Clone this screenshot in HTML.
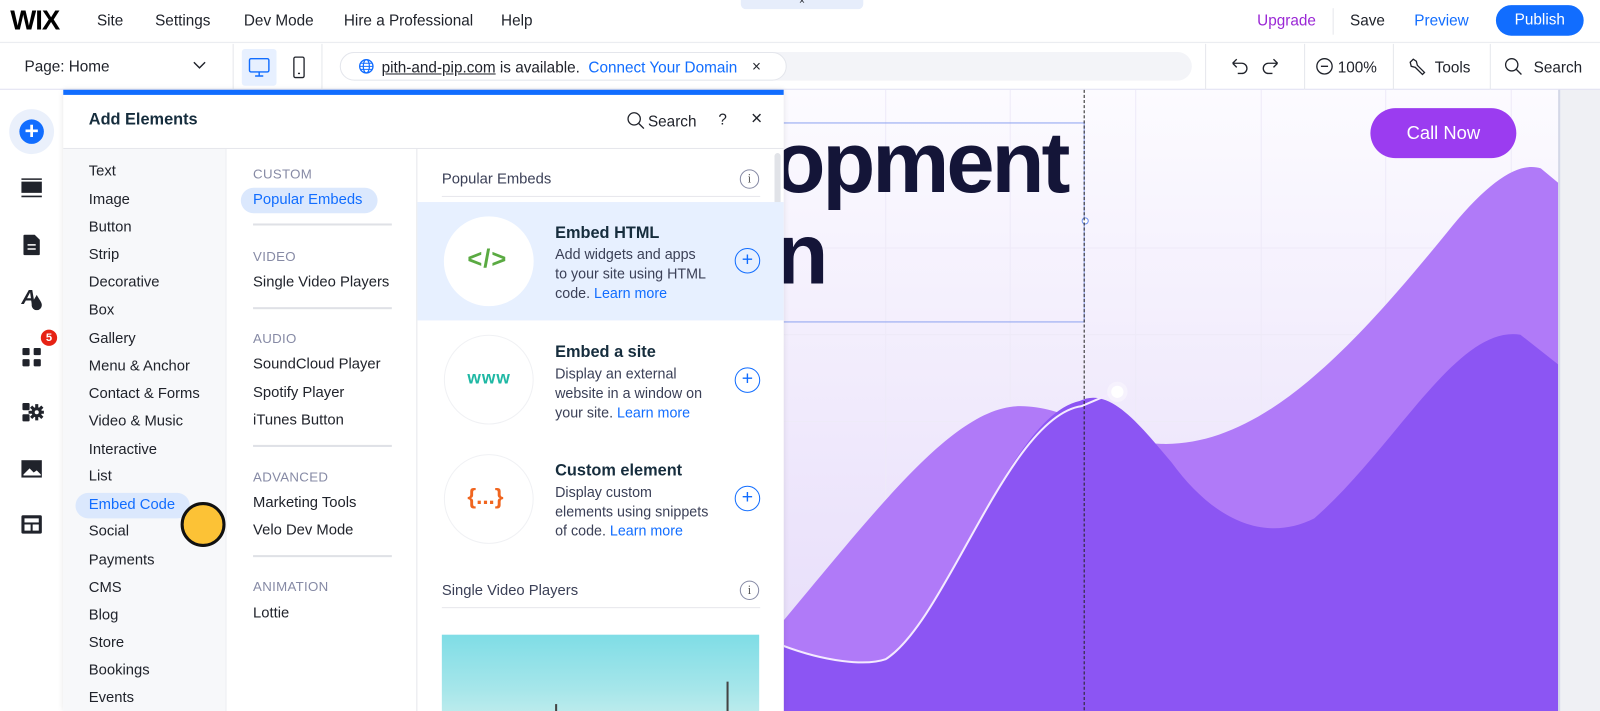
<!DOCTYPE html>
<html><head><meta charset="utf-8"><style>
*{margin:0;padding:0;box-sizing:border-box}
body{width:1600px;height:711px;overflow:hidden;position:relative;font-family:"Liberation Sans",sans-serif;color:#20232b;background:#fff}
#w{position:absolute;left:0;top:0;width:1568px;height:697px;transform:scale(1.020408);transform-origin:0 0;overflow:hidden}
.a{position:absolute;white-space:nowrap}
.t15{font-size:15px}
.c1 div{position:absolute;left:87px;font-size:14.5px;color:#20232b}
.hd{font-size:13px;color:#868aa5;letter-spacing:.3px}
.sep{position:absolute;left:248px;width:136px;height:2px;background:#dfe1e6}
.ttl{font-size:16px;font-weight:bold;color:#162d3d}
.desc{font-size:14px;line-height:19px;color:#3b4057}
.lm{color:#116dff}
.plus{position:absolute;width:25px;height:25px;border:1.5px solid #116dff;border-radius:50%;color:#116dff;text-align:center;line-height:21px;font-size:19px}
.circ{position:absolute;width:88px;height:88px;border-radius:50%;background:#fff;border:1px solid #f0f1f4}
.vd{position:absolute;top:43px;width:1px;height:45px;background:#e5e7ec}
</style></head><body><div id="w">
<!-- top bar -->
<div class="a" style="left:0;top:0;width:1568px;height:42px;border-bottom:1px solid #e8eaef"></div>
<div class="a" style="left:726px;top:0;width:120px;height:9px;background:#e6edfb;border-radius:0 0 5px 5px;font-size:10px;text-align:center;line-height:3px">×</div>
<div class="a" style="left:10px;top:5px;font-size:27px;font-weight:bold;letter-spacing:-1px;color:#000">WIX</div>
<div class="a t15" style="left:95px;top:12px">Site</div>
<div class="a t15" style="left:152px;top:12px">Settings</div>
<div class="a t15" style="left:239px;top:12px">Dev Mode</div>
<div class="a t15" style="left:337px;top:12px">Hire a Professional</div>
<div class="a t15" style="left:491px;top:12px">Help</div>
<div class="a t15" style="left:1232px;top:12px;color:#9a27d5">Upgrade</div>
<div class="a" style="left:1306px;top:8px;width:1px;height:26px;background:#e5e7ec"></div>
<div class="a t15" style="left:1323px;top:12px">Save</div>
<div class="a t15" style="left:1386px;top:12px;color:#116dff">Preview</div>
<div class="a t15" style="left:1466px;top:5px;width:86px;height:30px;border-radius:15px;background:#116dff;color:#fff;text-align:center;line-height:30px">Publish</div>
<!-- second bar -->
<div class="a" style="left:0;top:43px;width:1568px;height:45px;border-bottom:1px solid #dcdcf0;box-shadow:0 2px 3px rgba(120,110,200,.15)"></div>
<div class="a t15" style="left:24px;top:57px">Page: Home</div>
<svg class="a" style="left:189px;top:60px" width="13" height="9"><path d="M1 1l5.5 5.5L12 1" stroke="#20232b" stroke-width="1.4" fill="none"/></svg>
<div class="vd" style="left:228px"></div>
<div class="a" style="left:237px;top:48px;width:34px;height:36px;background:#e7f0ff;border-radius:3px"></div>
<svg class="a" style="left:243px;top:56px" width="22" height="20"><rect x="1.5" y="1.5" width="19" height="13" rx="1.5" stroke="#116dff" stroke-width="1.4" fill="none"/><path d="M11 15v3M7 18.5h8" stroke="#116dff" stroke-width="1.4"/></svg>
<svg class="a" style="left:287px;top:55px" width="12" height="22"><rect x="1" y="1" width="10" height="20" rx="1.5" stroke="#20232b" stroke-width="1.3" fill="none"/><path d="M5 17h2" stroke="#20232b" stroke-width="1.3"/></svg>
<div class="vd" style="left:315px"></div>
<div class="a" style="left:333px;top:51px;width:835px;height:28px;background:#f3f4f8;border-radius:14px"></div>
<div class="a" style="left:333px;top:51px;width:438px;height:28px;background:#fff;border:1px solid #e4e6ec;border-radius:14px"></div>
<svg class="a" style="left:351px;top:57px" width="16" height="16"><circle cx="8" cy="8" r="6.5" stroke="#116dff" stroke-width="1.3" fill="none"/><ellipse cx="8" cy="8" rx="3" ry="6.5" stroke="#116dff" stroke-width="1.2" fill="none"/><path d="M1.5 8h13M2.5 5h11M2.5 11h11" stroke="#116dff" stroke-width="1"/></svg>
<div class="a t15" style="left:374px;top:58px;color:#20232b"><span style="text-decoration:underline">pith-and-pip.com</span> is available.&nbsp; <span style="color:#116dff">Connect Your Domain</span></div>
<div class="a" style="left:737px;top:57px;font-size:15px">×</div>
<div class="vd" style="left:1181px"></div>
<svg class="a" style="left:1204px;top:56px" width="52" height="20"><path d="M4 6h9a5 5 0 010 10H9M4 6l4-4M4 6l4 4" stroke="#20232b" stroke-width="1.3" fill="none"/><path d="M48 6h-9a5 5 0 000 10h4M48 6l-4-4M48 6l-4 4" stroke="#20232b" stroke-width="1.3" fill="none"/></svg>
<div class="vd" style="left:1278px"></div>
<svg class="a" style="left:1289px;top:56px" width="18" height="18"><circle cx="9" cy="9" r="7.5" stroke="#20232b" stroke-width="1.3" fill="none"/><path d="M5.5 9h7" stroke="#20232b" stroke-width="1.3"/></svg>
<div class="a t15" style="left:1311px;top:58px">100%</div>
<div class="vd" style="left:1365px"></div>
<svg class="a" style="left:1379px;top:55px" width="20" height="20"><path d="M3 6l3-3 3 2 1 4 7 7-2 2-7-7-4-1z" stroke="#20232b" stroke-width="1.3" fill="none"/></svg>
<div class="a t15" style="left:1406px;top:58px">Tools</div>
<div class="vd" style="left:1460px"></div>
<svg class="a" style="left:1474px;top:56px" width="18" height="18"><circle cx="7.5" cy="7.5" r="6" stroke="#20232b" stroke-width="1.3" fill="none"/><path d="M12 12l5 5" stroke="#20232b" stroke-width="1.3"/></svg>
<div class="a t15" style="left:1503px;top:58px">Search</div>

<!-- canvas -->
<div class="a" style="left:768px;top:88px;width:760px;height:609px;background:linear-gradient(#fcfbff,#ece4fb 70%,#e6dcfa);overflow:hidden">
<svg width="760" height="623" style="position:absolute;left:0;top:0">
<g stroke="#eeeaf8" stroke-width="1"><path d="M100 0v623M222 0v623M345 0v623M468 0v623M590 0v623M713 0v623M0 155h760M0 240h760M0 325h760"/></g>
<path d="M0 520 C100 400 170 310 232 310 C280 310 320 345 370 347 C470 350 560 250 650 140 C690 90 720 70 742 77 L760 92 L760 623 L0 623Z" fill="#b07af8"/>
<path d="M0 545 C40 560 80 565 100 558 C160 520 220 320 290 305 C320 290 350 330 380 365 C420 420 470 445 520 420 C600 350 660 230 722 240 L760 270 L760 623 L0 623Z" fill="#8c55f3"/>
<path d="M0 545 C40 560 80 565 100 558 C160 520 220 320 292 310 L320 298" stroke="#f4eaff" stroke-width="2" fill="none"/>
<circle cx="327" cy="296" r="10" fill="#ffffff" opacity=".35"/><circle cx="327" cy="296" r="6" fill="#fff"/>
</svg>
<div class="a" style="left:-11px;top:24px;font-size:85px;line-height:95px;font-weight:bold;color:#141538;letter-spacing:-3px">opment</div>
<div class="a" style="left:-8px;top:114px;font-size:85px;line-height:95px;font-weight:bold;color:#141538">n</div>
<div class="a" style="left:0;top:32px;width:295px;height:196px;border:1px solid #8ea3f0;border-left:none"></div>
<div class="a" style="left:292px;top:125px;width:7px;height:7px;border:1px solid #6f8ff0;background:#fff;border-radius:50%"></div>
<div class="a" style="left:294px;top:0;height:623px;border-left:1.5px dashed #222"></div>
<div class="a" style="left:575px;top:18px;width:143px;height:49px;border-radius:25px;background:#9b3cf0;color:#fff;font-size:18px;text-align:center;line-height:49px">Call Now</div>
</div>
<div class="a" style="left:1527px;top:88px;width:41px;height:609px;background:#eff0f4;border-left:2px solid #d4d8e8"></div>

<!-- left rail -->
<div class="a" style="left:0;top:88px;width:62px;height:609px;background:#fff"></div>
<div class="a" style="left:9px;top:107px;width:44px;height:44px;border-radius:50%;background:#eaf0fb"></div>
<div class="a" style="left:19px;top:117px;width:24px;height:24px;border-radius:50%;background:#116dff;color:#fff;text-align:center;font-size:24px;line-height:23px;font-weight:bold">+</div>
<svg class="a" style="left:20px;top:174px" width="22" height="20"><rect x="1" y="4" width="20" height="11" fill="#20232b"/><path d="M1 1.5h20M1 18.5h20" stroke="#20232b" stroke-width="1.5"/></svg>
<svg class="a" style="left:22px;top:229px" width="18" height="22"><path d="M2 1h10l5 5v14a1 1 0 01-1 1H2a1 1 0 01-1-1V2a1 1 0 011-1z" fill="#20232b"/><path d="M5 11h8M5 15h8" stroke="#fff" stroke-width="1.5"/></svg>
<div class="a" style="left:21px;top:281px;font-size:20px;font-weight:bold;font-style:italic;color:#20232b">A</div>
<svg class="a" style="left:30px;top:288px" width="12" height="16"><path d="M6 1C4 5 1 8 1 11a5 5 0 0010 0c0-3-3-6-5-10z" fill="#20232b"/></svg>
<svg class="a" style="left:21px;top:340px" width="20" height="20"><rect x="1" y="1" width="7" height="7" rx="1" fill="#20232b"/><rect x="12" y="1" width="7" height="7" rx="1" fill="#20232b"/><rect x="1" y="12" width="7" height="7" rx="1" fill="#20232b"/><rect x="12" y="12" width="7" height="7" rx="1" fill="#20232b"/></svg>
<div class="a" style="left:40px;top:323px;width:16px;height:16px;border-radius:50%;background:#e62214;color:#fff;font-size:11px;text-align:center;line-height:16px;font-weight:bold">5</div>
<svg class="a" style="left:21px;top:394px" width="22" height="20"><rect x="1" y="1" width="7" height="7" rx="1" fill="#20232b"/><rect x="1" y="12" width="7" height="7" rx="1" fill="#20232b"/><circle cx="15" cy="10" r="5" fill="#20232b"/><path d="M15 2v16M7 10h16M9.5 4.5l11 11M20.5 4.5l-11 11" stroke="#20232b" stroke-width="3"/><circle cx="15" cy="10" r="2" fill="#fff"/></svg>
<svg class="a" style="left:20px;top:450px" width="22" height="19"><rect x="1" y="1" width="20" height="17" fill="#20232b"/><path d="M3 15l6-6 4 4 3-2 4 4v1H3z" fill="#fff"/></svg>
<svg class="a" style="left:20px;top:504px" width="22" height="20"><rect x="1" y="1" width="20" height="18" rx="1.5" fill="#20232b"/><rect x="4" y="4" width="14" height="4" fill="#fff"/><rect x="4" y="10" width="6" height="6" fill="#fff"/><rect x="12" y="10" width="6" height="6" fill="#fff"/></svg>

<!-- panel -->
<div class="a" style="left:62px;top:88px;width:706px;height:609px;background:#fff;box-shadow:0 0 6px rgba(0,0,0,.12)"></div>
<div class="a" style="left:62px;top:88px;width:706px;height:5px;background:#116dff"></div>
<div class="a" style="left:87px;top:109px;font-size:16px;font-weight:bold;color:#162d3d">Add Elements</div>
<svg class="a" style="left:614px;top:109px" width="18" height="18"><circle cx="7.5" cy="7.5" r="6" stroke="#20232b" stroke-width="1.3" fill="none"/><path d="M12 12l5 5" stroke="#20232b" stroke-width="1.3"/></svg>
<div class="a t15" style="left:635px;top:111px">Search</div>
<div class="a t15" style="left:704px;top:109px">?</div>
<div class="a" style="left:736px;top:106px;font-size:19px">×</div>
<div class="a" style="left:62px;top:145px;width:706px;height:1px;background:#e6e7ec"></div>
<div class="a" style="left:62px;top:146px;width:160px;height:565px;background:#f7f8fa;border-right:1px solid #eceef2"></div>
<div class="a" style="left:408px;top:146px;width:1px;height:565px;background:#e6e7ec"></div>
<div class="a" style="left:759px;top:150px;width:6px;height:80px;background:#e1e3e8;border-radius:3px"></div>
<div class="a" style="left:74px;top:483px;width:112px;height:25px;background:#dbe8fd;border-radius:13px"></div>
<div class="c1">
<div style="top:160px">Text</div><div style="top:188px">Image</div><div style="top:215px">Button</div><div style="top:242px">Strip</div><div style="top:269px">Decorative</div><div style="top:296px">Box</div><div style="top:324px">Gallery</div><div style="top:351px">Menu &amp; Anchor</div><div style="top:378px">Contact &amp; Forms</div><div style="top:405px">Video &amp; Music</div><div style="top:433px">Interactive</div><div style="top:459px">List</div><div style="top:487px;color:#116dff">Embed Code</div><div style="top:513px">Social</div><div style="top:541px">Payments</div><div style="top:568px">CMS</div><div style="top:595px">Blog</div><div style="top:622px">Store</div><div style="top:649px">Bookings</div><div style="top:676px">Events</div>
</div>
<div class="a" style="left:177px;top:492px;width:44px;height:44px;border-radius:50%;background:#fcc236;border:3px solid #111"></div>

<div class="a hd" style="left:248px;top:163px">CUSTOM</div>
<div class="a" style="left:236px;top:184px;width:134px;height:25px;background:#dbe8fd;border-radius:13px"></div>
<div class="a" style="left:248px;top:188px;font-size:14.5px;color:#116dff">Popular Embeds</div>
<div class="sep" style="top:219px"></div>
<div class="a hd" style="left:248px;top:244px">VIDEO</div>
<div class="a" style="left:248px;top:269px;font-size:14.5px">Single Video Players</div>
<div class="sep" style="top:301px"></div>
<div class="a hd" style="left:248px;top:324px">AUDIO</div>
<div class="a" style="left:248px;top:349px;font-size:14.5px">SoundCloud Player</div>
<div class="a" style="left:248px;top:377px;font-size:14.5px">Spotify Player</div>
<div class="a" style="left:248px;top:404px;font-size:14.5px">iTunes Button</div>
<div class="sep" style="top:436px"></div>
<div class="a hd" style="left:248px;top:460px">ADVANCED</div>
<div class="a" style="left:248px;top:485px;font-size:14.5px">Marketing Tools</div>
<div class="a" style="left:248px;top:512px;font-size:14.5px">Velo Dev Mode</div>
<div class="sep" style="top:544px"></div>
<div class="a hd" style="left:248px;top:567px">ANIMATION</div>
<div class="a" style="left:248px;top:593px;font-size:14.5px">Lottie</div>

<div class="a" style="left:433px;top:168px;font-size:14.5px;color:#3b4057">Popular Embeds</div>
<div class="a" style="left:725px;top:166px;width:19px;height:19px;border:1.3px solid #868aa5;border-radius:50%;font-size:12px;text-align:center;line-height:17px;color:#555;font-family:'Liberation Serif',serif">i</div>
<div class="a" style="left:433px;top:192px;width:312px;height:1px;background:#e6e7ec"></div>
<div class="a" style="left:409px;top:198px;width:359px;height:116px;background:#e7f0ff"></div>
<div class="circ" style="left:435px;top:212px;border-color:#fff"></div>
<div class="a" style="left:458px;top:240px;font-size:25px;font-weight:bold;color:#5aaa42;letter-spacing:1px">&lt;/&gt;</div>
<div class="a ttl" style="left:544px;top:220px">Embed HTML</div>
<div class="a desc" style="left:544px;top:240px">Add widgets and apps<br>to your site using HTML<br>code. <span class="lm">Learn more</span></div>
<div class="plus" style="left:720px;top:243px">+</div>

<div class="circ" style="left:435px;top:328px"></div>
<div class="a" style="left:458px;top:361px;font-size:17px;font-weight:bold;color:#1fb8a4;letter-spacing:1px">www</div>
<div class="a ttl" style="left:544px;top:337px">Embed a site</div>
<div class="a desc" style="left:544px;top:357px">Display an external<br>website in a window on<br>your site. <span class="lm">Learn more</span></div>
<div class="plus" style="left:720px;top:360px">+</div>

<div class="circ" style="left:435px;top:445px"></div>
<div class="a" style="left:458px;top:474px;font-size:22px;font-weight:bold;color:#f0651f">{...}</div>
<div class="a ttl" style="left:544px;top:453px">Custom element</div>
<div class="a desc" style="left:544px;top:473px">Display custom<br>elements using snippets<br>of code. <span class="lm">Learn more</span></div>
<div class="plus" style="left:720px;top:476px">+</div>

<div class="a" style="left:433px;top:571px;font-size:14.5px;color:#3b4057">Single Video Players</div>
<div class="a" style="left:725px;top:569px;width:19px;height:19px;border:1.3px solid #868aa5;border-radius:50%;font-size:12px;text-align:center;line-height:17px;color:#555;font-family:'Liberation Serif',serif">i</div>
<div class="a" style="left:433px;top:595px;width:312px;height:1px;background:#e6e7ec"></div>
<div class="a" style="left:433px;top:622px;width:311px;height:89px;background:linear-gradient(#7fdde6,#a6e6ea 60%,#c7eeee)"></div>
<div class="a" style="left:544px;top:690px;width:1.5px;height:21px;background:#444"></div>
<div class="a" style="left:712px;top:668px;width:1.5px;height:43px;background:#444"></div>
</div></body></html>
